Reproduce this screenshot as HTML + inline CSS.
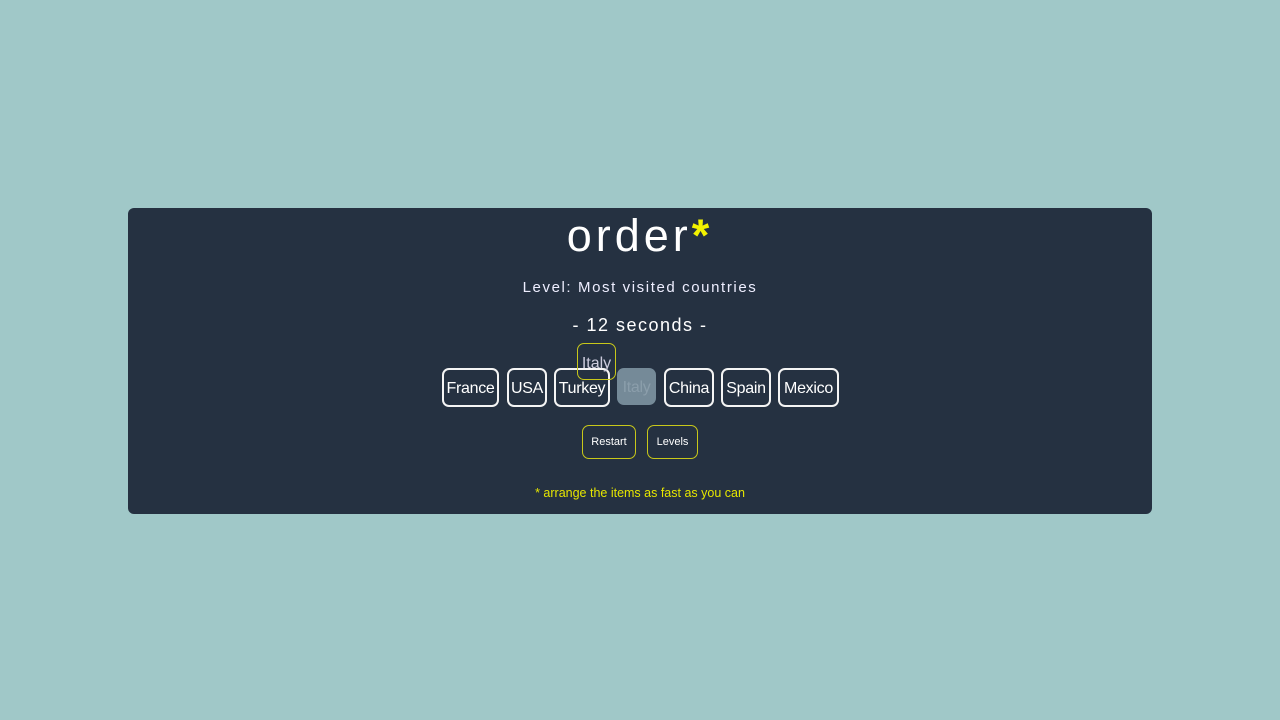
<!DOCTYPE html>
<html><head><style>
body{margin:0;width:1280px;height:720px;background:#a0c8c8;font-family:"Liberation Sans",sans-serif;position:relative;overflow:hidden}
.card{position:absolute;left:128px;top:208px;width:1024px;height:306px;background:#253141;border-radius:6px}
.t{position:absolute;left:0;width:1280px;text-align:center;color:#fff;white-space:nowrap}
.b{position:absolute;top:368px;height:35px;border:2px solid #f4f4f4;border-radius:7px;color:#fff;font-size:16px;line-height:37px;text-align:center;box-sizing:content-box;letter-spacing:-0.3px}
.y{position:absolute;border:1.5px solid #c8c81a;border-radius:7px;color:#fff;font-size:11px;text-align:center}
</style></head><body>
<div class="card"></div>
<div class="t" style="top:208px;font-size:45px;letter-spacing:4px;line-height:56px">order<span style="color:#f2f200;font-weight:bold">*</span></div>
<div class="t" style="top:279px;font-size:15px;letter-spacing:1.6px;color:#eef">Level: Most visited countries</div>
<div class="t" style="top:315px;font-size:18px;letter-spacing:1.5px">- 12 seconds -</div>
<div class="b" style="left:442px;width:53px">France</div>
<div class="b" style="left:507px;width:36px">USA</div>
<div class="b" style="left:554px;width:52px">Turkey</div>
<div class="b" style="left:617px;width:39px;top:368px;height:37px;border:none;background:#758a98;color:#8b9eab;line-height:39px">Italy</div>
<div class="b" style="left:664px;width:46px">China</div>
<div class="b" style="left:721px;width:46px">Spain</div>
<div class="b" style="left:778px;width:57px">Mexico</div>
<div class="y" style="left:577px;top:343px;width:37px;height:35px;line-height:39px;font-size:16px;color:#ccd">Italy</div>
<div class="y" style="left:582px;top:425px;width:52px;height:32px;line-height:32px">Restart</div>
<div class="y" style="left:647px;top:425px;width:49px;height:32px;line-height:32px">Levels</div>
<div class="t" style="top:486px;font-size:12.5px;color:#e6e600">* arrange the items as fast as you can</div>
</body></html>
